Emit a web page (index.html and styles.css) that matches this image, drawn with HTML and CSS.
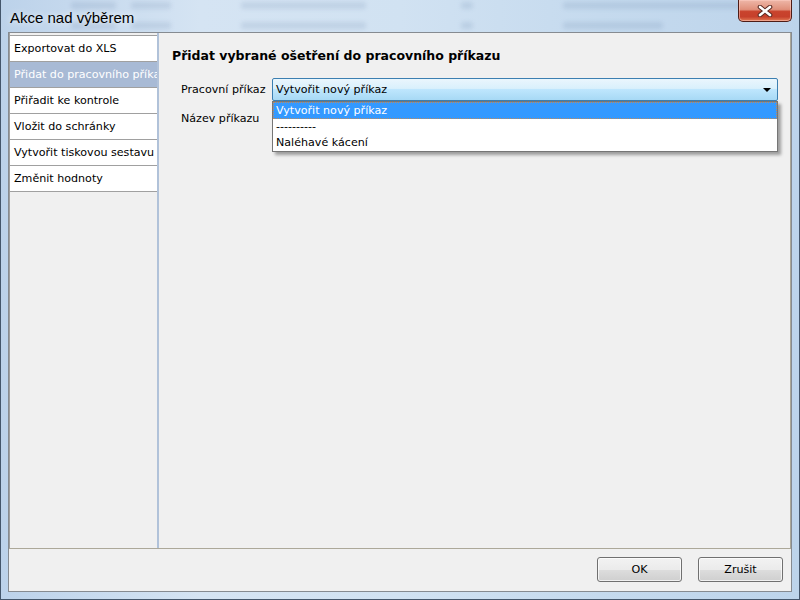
FILE: index.html
```html
<!DOCTYPE html>
<html lang="cs">
<head>
<meta charset="utf-8">
<title>Akce nad výběrem</title>
<link rel="stylesheet" href="styles.css">
</head>
<body>
<div class="window">
  <div class="titlebar">
    <div class="ghost">
      <div class="ghost-row r1"><i class="g g1"></i><i class="g g2"></i><i class="g g3"></i><i class="g g4"></i><i class="g g5"></i></div>
      <div class="ghost-row r2"><i class="g g1"></i><i class="g g2"></i><i class="g g3"></i><i class="g g4"></i><i class="g g6"></i></div>
    </div>
    <span class="title">Akce nad výběrem</span>
    <div class="close">
      <svg width="16" height="12" viewBox="0 0 16 12">
        <path d="M3 2 L13 10 M13 2 L3 10" stroke="#5a2a22" stroke-width="4.6" stroke-linecap="round"/>
        <path d="M3 2 L13 10 M13 2 L3 10" stroke="#ffffff" stroke-width="2.6" stroke-linecap="round"/>
      </svg>
    </div>
  </div>
  <div class="client">
    <div class="main">
      <ul class="nav">
        <li class="item first">Exportovat do XLS</li>
        <li class="item sel">Přidat do pracovního příkazu</li>
        <li class="item">Přiřadit ke kontrole</li>
        <li class="item">Vložit do schránky</li>
        <li class="item">Vytvořit tiskovou sestavu</li>
        <li class="item">Změnit hodnoty</li>
      </ul>
      <div class="splitter"></div>
      <div class="pane">
        <h1 class="heading">Přidat vybrané ošetření do pracovního příkazu</h1>
        <div class="form">
          <div class="row">
            <span class="label">Pracovní příkaz</span>
            <div class="combo">
              <span class="combo-text">Vytvořit nový příkaz</span>
              <span class="arrow"></span>
              <ul class="dropdown">
                <li class="opt active">Vytvořit nový příkaz</li>
                <li class="opt">----------</li>
                <li class="opt">Naléhavé kácení</li>
              </ul>
            </div>
          </div>
          <div class="row">
            <span class="label">Název příkazu</span>
          </div>
        </div>
      </div>
    </div>
    <div class="footer">
      <button class="btn">OK</button>
      <button class="btn">Zrušit</button>
    </div>
  </div>
</div>
</body>
</html>
```
FILE: styles.css
```css
* { box-sizing: border-box; }
html, body { margin: 0; padding: 0; }
body {
  width: 800px;
  height: 600px;
  overflow: hidden;
  font-family: "DejaVu Sans", "Liberation Sans", sans-serif;
  font-size: 11.1px;
  color: #000;
  background: #bcd3ea;
}
.window {
  width: 800px;
  height: 600px;
  display: flex;
  flex-direction: column;
  background: linear-gradient(to right, #bcd2ea 0%, #d5e4f3 25%, #d1e2f2 50%, #c5daee 75%, #bdd4eb 100%);
  border: 1px solid #44566b;
  border-top: none;
}
.titlebar {
  position: relative;
  height: 32px;
  flex: none;
  display: flex;
  align-items: center;
  padding-left: 9px;
  overflow: hidden;
}
.ghost {
  position: absolute;
  left: 0;
  top: 0;
  right: 0;
  bottom: 0;
  filter: blur(2px);
  pointer-events: none;
}
.ghost-row {
  display: flex;
  height: 7px;
  align-items: stretch;
}
.ghost-row.r1 { margin-top: 2px; }
.ghost-row.r2 { margin-top: 13px; }
.g {
  display: block;
  background: rgba(70, 100, 150, 0.13);
  border-radius: 3px;
}
.g1 { margin-left: 70px; width: 45px; }
.g2 { margin-left: 15px; width: 40px; }
.g3 { margin-left: 70px; width: 125px; }
.g4 { margin-left: 95px; width: 12px; }
.g5 { margin-left: 90px; width: 180px; }
.g6 { margin-left: 90px; width: 100px; }
.title {
  position: relative;
  font-family: "Liberation Sans", Arial, sans-serif;
  font-size: 15px;
  color: #000;
  text-shadow: 0 0 6px rgba(255, 255, 255, 0.9);
  margin-top: 2px;
}
.close {
  position: relative;
  align-self: flex-start;
  margin-left: auto;
  margin-right: 7px;
  width: 54px;
  height: 22px;
  border: 1px solid #4e1c16;
  border-top: none;
  border-radius: 0 0 5px 5px;
  background: linear-gradient(to bottom, #eeb7a8 0%, #e0907b 45%, #c9432d 55%, #c6402b 80%, #e27b55 100%);
  box-shadow: inset 0 0 0 1px rgba(255, 210, 200, 0.5);
  display: flex;
  align-items: center;
  justify-content: center;
}
.client {
  margin: 0 7px;
  height: 560px;
  flex: none;
  border: 1px solid #868b91;
  background: #f0f0f0;
  display: flex;
  flex-direction: column;
}
.main {
  height: 516px;
  flex: none;
  display: flex;
  border-bottom: 1px solid #aca899;
  border-right: 1px solid #aca899;
}
.nav {
  width: 148px;
  flex: none;
  margin: 0;
  padding: 2px 0 0 0;
  list-style: none;
  background: #f0f0f0;
  border-left: 1px solid #a0a0a0;
}
.item {
  height: 26px;
  display: flex;
  align-items: center;
  padding-left: 4px;
  background: #fff;
  border-bottom: 1px solid #a0a0a0;
  white-space: nowrap;
  overflow: hidden;
}
.item.first {
  height: 27px;
  border-top: 1px solid #a0a0a0;
}
.item.sel {
  background: #a8bad5;
  color: #fff;
}
.splitter {
  width: 2px;
  flex: none;
  background: #b1c2d9;
}
.pane {
  flex: 1;
  padding-left: 13px;
}
.heading {
  margin: 15px 0 0 0;
  font-size: 12.5px;
  line-height: 16px;
  font-weight: bold;
}
.form {
  margin-top: 14px;
  margin-left: 9px;
  display: flex;
  flex-direction: column;
  gap: 6px;
}
.row {
  display: flex;
  align-items: center;
  height: 23px;
}
.label {
  width: 91px;
  flex: none;
  white-space: nowrap;
}
.combo {
  position: relative;
  width: 506px;
  height: 23px;
  border: 1px solid #3c7fb1;
  border-radius: 2px;
  background: linear-gradient(to bottom, #eaf6fd 0%, #d9f0fc 45%, #bee6fd 50%, #a7d9f5 100%);
  display: flex;
  align-items: center;
  padding-left: 3px;
}
.arrow {
  position: absolute;
  right: 6px;
  top: 9px;
  width: 0;
  height: 0;
  border-left: 4px solid transparent;
  border-right: 4px solid transparent;
  border-top: 4px solid #000;
}
.dropdown {
  position: absolute;
  left: -1px;
  top: 22px;
  width: 506px;
  margin: 0;
  padding: 0;
  list-style: none;
  background: #fff;
  border: 1px solid #767676;
  box-shadow: 3px 3px 3px rgba(0, 0, 0, 0.35);
}
.opt {
  height: 16px;
  line-height: 16px;
  padding-left: 3px;
  white-space: nowrap;
}
.opt.active {
  height: 17px;
  background: #3399ff;
  color: #fff;
  border: 1px dotted #c08a5a;
  padding-left: 2px;
  line-height: 15px;
}
.footer {
  flex: 1;
  display: flex;
  justify-content: flex-end;
  align-items: flex-start;
  gap: 16px;
  padding: 8px 8px 0 0;
}
.btn {
  width: 85px;
  height: 25px;
  font-family: "DejaVu Sans", "Liberation Sans", sans-serif;
  font-size: 11.1px;
  color: #000;
  border: 1px solid #707070;
  border-radius: 3px;
  background: linear-gradient(to bottom, #f2f2f2 0%, #ebebeb 50%, #dddddd 51%, #cfcfcf 100%);
  box-shadow: inset 0 0 0 1px rgba(255, 255, 255, 0.7);
  padding: 0;
}
```
